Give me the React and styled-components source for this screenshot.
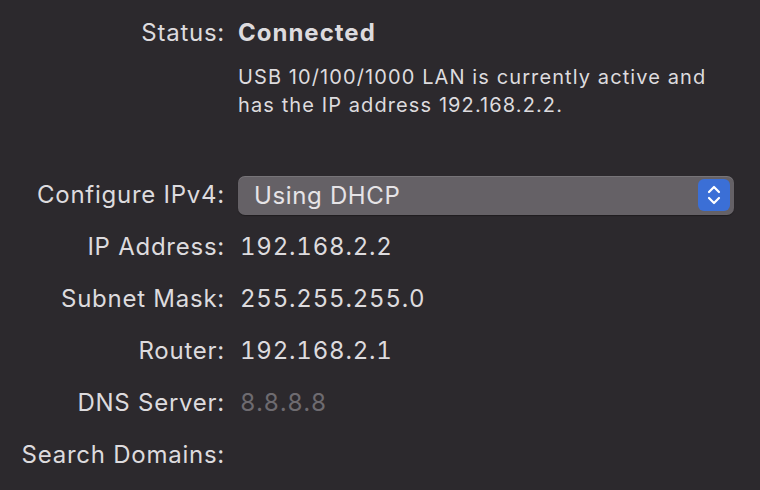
import React from "react";
import styled, { createGlobalStyle } from "styled-components";

const GlobalStyle = createGlobalStyle`
  html, body {
    margin: 0;
    padding: 0;
    background: #2c292d;
  }
  body {
    font-family: Inter, "Noto Sans", sans-serif;
    color: #dddbde;
  }
`;

const Pane = styled.div`
  width: 760px;
  height: 490px;
  overflow: hidden;
  background: #2c292d;
  display: grid;
  grid-template-columns: 225px 1fr;
  column-gap: 13px;
  align-content: start;
  padding: 18px 26px 0 0;
  box-sizing: border-box;
`;

const Label = styled.div`
  text-align: right;
  font-size: 24px;
  letter-spacing: 0.75px;
  line-height: ${(p) => p.$h || 52}px;
  white-space: nowrap;
`;

const Value = styled.div`
  font-size: 24px;
  letter-spacing: ${(p) => (p.$bold ? 1 : 0.8)}px;
  font-feature-settings: "tnum";
  line-height: ${(p) => p.$h || 52}px;
  font-weight: ${(p) => (p.$bold ? 700 : 400)};
  color: ${(p) => (p.$dim ? "#6e6b70" : "#dddbde")};
  padding-left: ${(p) => (p.$bold ? 0 : 2)}px;
  white-space: nowrap;
`;

const Note = styled.div`
  grid-column: 2;
  font-size: 20px;
  letter-spacing: 1.1px;
  line-height: 28px;
  margin-top: 15px;
  margin-bottom: 50px;
  white-space: nowrap;
`;

const Spacer = styled.div``;

const PopupCell = styled.div`
  height: 52px;
  display: flex;
  align-items: center;
`;

const Popup = styled.div`
  flex: 1;
  height: 39px;
  border-radius: 7px;
  background: #656166;
  box-shadow: inset 0 1px 0 rgba(255, 255, 255, 0.12), 0 1px 1px rgba(0, 0, 0, 0.3);
  display: flex;
  align-items: center;
  justify-content: space-between;
  padding: 0 4px 0 16px;
  font-size: 24px;
  letter-spacing: 0.65px;
  color: #e6e4e7;
`;

const Stepper = styled.div`
  width: 32px;
  height: 32px;
  border-radius: 6px;
  background: #3b6fd6;
  display: flex;
  align-items: center;
  justify-content: center;
`;

const rows = [
  ["IP Address:", "192.168.2.2"],
  ["Subnet Mask:", "255.255.255.0"],
  ["Router:", "192.168.2.1"],
  ["DNS Server:", "8.8.8.8", true],
  ["Search Domains:", ""],
];

export default function App() {
  return (
    <>
      <GlobalStyle />
      <Pane>
        <Label $h={30}>Status:</Label>
        <Value $h={30} $bold>Connected</Value>
        <Spacer />
        <Note>
          USB 10/100/1000 LAN is currently active and
          <br />
          has the IP address 192.168.2.2.
        </Note>
        <Label>Configure IPv4:</Label>
        <PopupCell>
          <Popup>
            Using DHCP
            <Stepper>
              <svg width="16" height="22" viewBox="0 0 16 22" fill="none">
                <path d="M3 8 L8 3 L13 8" stroke="#fff" strokeWidth="2.2" strokeLinecap="round" strokeLinejoin="round" />
                <path d="M3 14 L8 19 L13 14" stroke="#fff" strokeWidth="2.2" strokeLinecap="round" strokeLinejoin="round" />
              </svg>
            </Stepper>
          </Popup>
        </PopupCell>
        {rows.map(([k, v, dim]) => (
          <React.Fragment key={k}>
            <Label>{k}</Label>
            <Value $dim={dim}>{v}</Value>
          </React.Fragment>
        ))}
      </Pane>
    </>
  );
}
